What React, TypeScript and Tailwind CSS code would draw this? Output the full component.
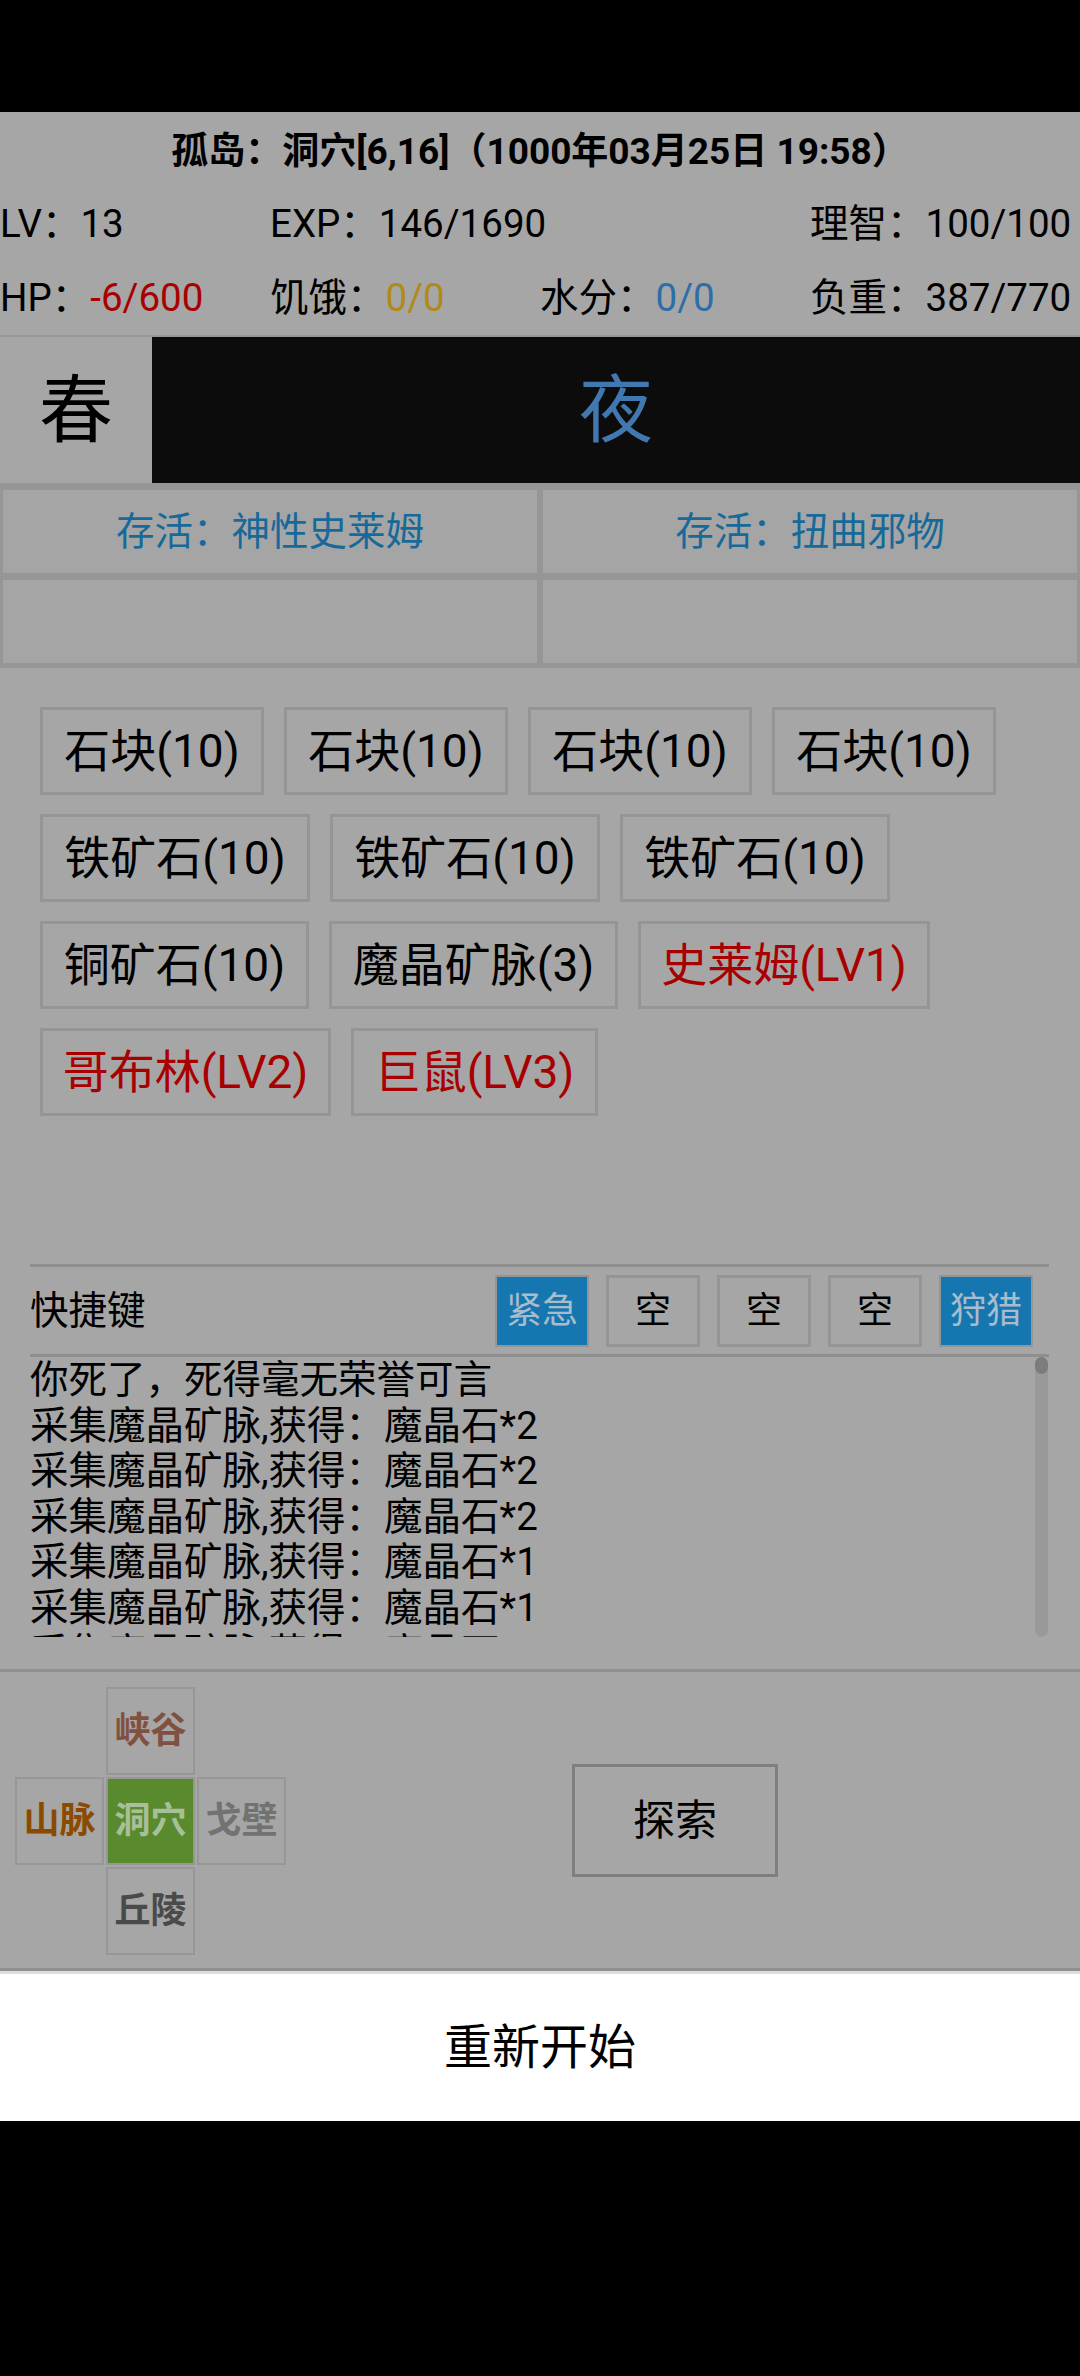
const stats = [
  [
    { label: 'LV：', value: '13', color: '' },
    { label: 'EXP：', value: '146/1690', color: '' },
    null,
    { label: '理智：', value: '100/100', color: '' },
  ],
  [
    { label: 'HP：', value: '-6/600', color: 'text-[#a80000]' },
    { label: '饥饿：', value: '0/0', color: 'text-[#b08a18]' },
    { label: '水分：', value: '0/0', color: 'text-[#2d6ea8]' },
    { label: '负重：', value: '387/770', color: '' },
  ],
]

const items = [
  { label: '石块(10)', w: 'w-[224px]', enemy: false },
  { label: '石块(10)', w: 'w-[224px]', enemy: false },
  { label: '石块(10)', w: 'w-[224px]', enemy: false },
  { label: '石块(10)', w: 'w-[224px]', enemy: false },
  { label: '铁矿石(10)', w: 'w-[270px]', enemy: false },
  { label: '铁矿石(10)', w: 'w-[270px]', enemy: false },
  { label: '铁矿石(10)', w: 'w-[270px]', enemy: false },
  { label: '铜矿石(10)', w: 'w-[269px]', enemy: false },
  { label: '魔晶矿脉(3)', w: 'w-[289px]', enemy: false },
  { label: '史莱姆(LV1)', w: 'w-[292px]', enemy: true },
  { label: '哥布林(LV2)', w: 'w-[291px]', enemy: true },
  { label: '巨鼠(LV3)', w: 'w-[247px]', enemy: true },
]

const shortcuts = [
  { label: '紧急', active: true },
  { label: '空', active: false },
  { label: '空', active: false },
  { label: '空', active: false },
  { label: '狩猎', active: true },
]

const logs = [
  '你死了，死得毫无荣誉可言',
  '采集魔晶矿脉,获得：魔晶石*2',
  '采集魔晶矿脉,获得：魔晶石*2',
  '采集魔晶矿脉,获得：魔晶石*2',
  '采集魔晶矿脉,获得：魔晶石*1',
  '采集魔晶矿脉,获得：魔晶石*1',
  '采集魔晶矿脉,获得：魔晶石*2',
]

export default function App() {
  return (
    <div className="w-[1080px] h-[2376px] bg-black flex flex-col overflow-hidden text-black font-[Roboto,'Noto_Sans_CJK_SC',sans-serif]">
      <div className="h-[112px] shrink-0" />

      <div className="h-[1856px] shrink-0 bg-[#a6a6a6] flex flex-col">
        {/* title */}
        <div className="h-[74px] pt-[6px] flex items-center justify-center text-[37px] font-bold">
          孤岛：洞穴[6,16]（1000年03月25日 19:58）
        </div>

        {/* stats */}
        {stats.map((row, i) => (
          <div key={i} className={`${i === 0 ? 'h-[75px]' : 'h-[74px]'} grid grid-cols-4 items-center text-[38.5px]`}>
            {row.map((s, j) =>
              s ? (
                <div key={j} className="whitespace-nowrap">
                  {s.label}
                  <span className={s.color}>{s.value}</span>
                </div>
              ) : (
                <div key={j} />
              )
            )}
          </div>
        ))}
        <div className="h-[2px] bg-[#969696]" />

        {/* season / time */}
        <div className="h-[146px] flex">
          <div className="w-[152px] flex items-center justify-center text-[74px]">春</div>
          <div className="flex-1 bg-[#0c0c0c] flex items-center justify-center text-[74px] text-[#4178b0]">夜</div>
        </div>

        {/* survival */}
        <div className="h-[185px] bg-[#969696] px-[3px] pt-[7px] pb-[5px] grid grid-cols-2 grid-rows-2 gap-x-[6px] gap-y-[7px]">
          <div className="bg-[#a5a5a5] flex items-center justify-center text-[38.5px] text-[#17699a]">存活：神性史莱姆</div>
          <div className="bg-[#a5a5a5] flex items-center justify-center text-[38.5px] text-[#17699a]">存活：扭曲邪物</div>
          <div className="bg-[#a5a5a5]" />
          <div className="bg-[#a5a5a5]" />
        </div>

        {/* items */}
        <div className="h-[596px] px-[40px] pt-[39px] flex flex-wrap content-start gap-x-[20px] gap-y-[19px]">
          {items.map((it, i) => (
            <div
              key={i}
              className={`${it.w} h-[88px] border-[3px] border-[#959595] flex items-center justify-center text-[46px] whitespace-nowrap ${it.enemy ? 'text-[#a80000]' : ''}`}
            >
              {it.label}
            </div>
          ))}
        </div>

        <div className="h-[3px] ml-[30px] mr-[31px] bg-[#8e8e8e]" />

        {/* shortcuts */}
        <div className="h-[87px] pl-[30px] pr-[47px] flex items-center">
          <div className="text-[38.5px]">快捷键</div>
          <div className="ml-auto flex gap-[17px]">
            {shortcuts.map((s, i) => (
              <div
                key={i}
                className={`w-[94px] h-[72px] flex items-center justify-center text-[36px] ${
                  s.active ? 'bg-[#1677b0] text-[#a9bccb] border-[2px] border-[#959595]' : 'border-[3px] border-[#959595]'
                }`}
              >
                {s.label}
              </div>
            ))}
          </div>
        </div>

        <div className="h-[3px] ml-[30px] mr-[31px] bg-[#8e8e8e]" />

        {/* log */}
        <div className="h-[280px] pl-[30px] pr-[32px] flex">
          <div className="flex-1 overflow-hidden text-[38.5px] leading-[45.5px]">
            {logs.map((l, i) => (
              <div key={i} className="whitespace-nowrap">{l}</div>
            ))}
          </div>
          <div className="w-[13px] h-full rounded-full bg-[#999999]">
            <div className="h-[17px] rounded-full bg-[#7c7c7c]" />
          </div>
        </div>

        <div className="h-[32px]" />
        <div className="h-[3px] bg-[#909090]" />

        {/* map nav */}
        <div className="h-[296px] flex">
          <div className="ml-[15px] mt-[15px] grid grid-cols-[89px_89px_89px] grid-rows-[88px_88px_88px] gap-[2px] text-[36px] font-bold">
            <div className="col-start-2 row-start-1 border-[2px] border-[#979797] flex items-center justify-center text-[#805040]">峡谷</div>
            <div className="col-start-1 row-start-2 border-[2px] border-[#979797] flex items-center justify-center text-[#8a4a00]">山脉</div>
            <div className="col-start-2 row-start-2 border-[2px] border-[#979797] bg-[#5a8a2e] flex items-center justify-center text-[#a8c09a]">洞穴</div>
            <div className="col-start-3 row-start-2 border-[2px] border-[#979797] flex items-center justify-center text-[#727272]">戈壁</div>
            <div className="col-start-2 row-start-3 border-[2px] border-[#979797] flex items-center justify-center text-[#4a4a4a]">丘陵</div>
          </div>
          <div className="flex-1 pr-[16px] flex items-center justify-center">
            <div className="w-[206px] h-[113px] border-[3px] border-[#7f7f7f] flex items-center justify-center text-[42px]">探索</div>
          </div>
        </div>
      </div>

      <div className="h-[3px] shrink-0 bg-[#8f8f8f]" />
      <div className="h-[3px] shrink-0 bg-[#dcdcdc]" />
      <div className="h-[147px] shrink-0 bg-white flex items-center justify-center text-[48px]">重新开始</div>
      <div className="flex-1 bg-black" />
    </div>
  )
}
